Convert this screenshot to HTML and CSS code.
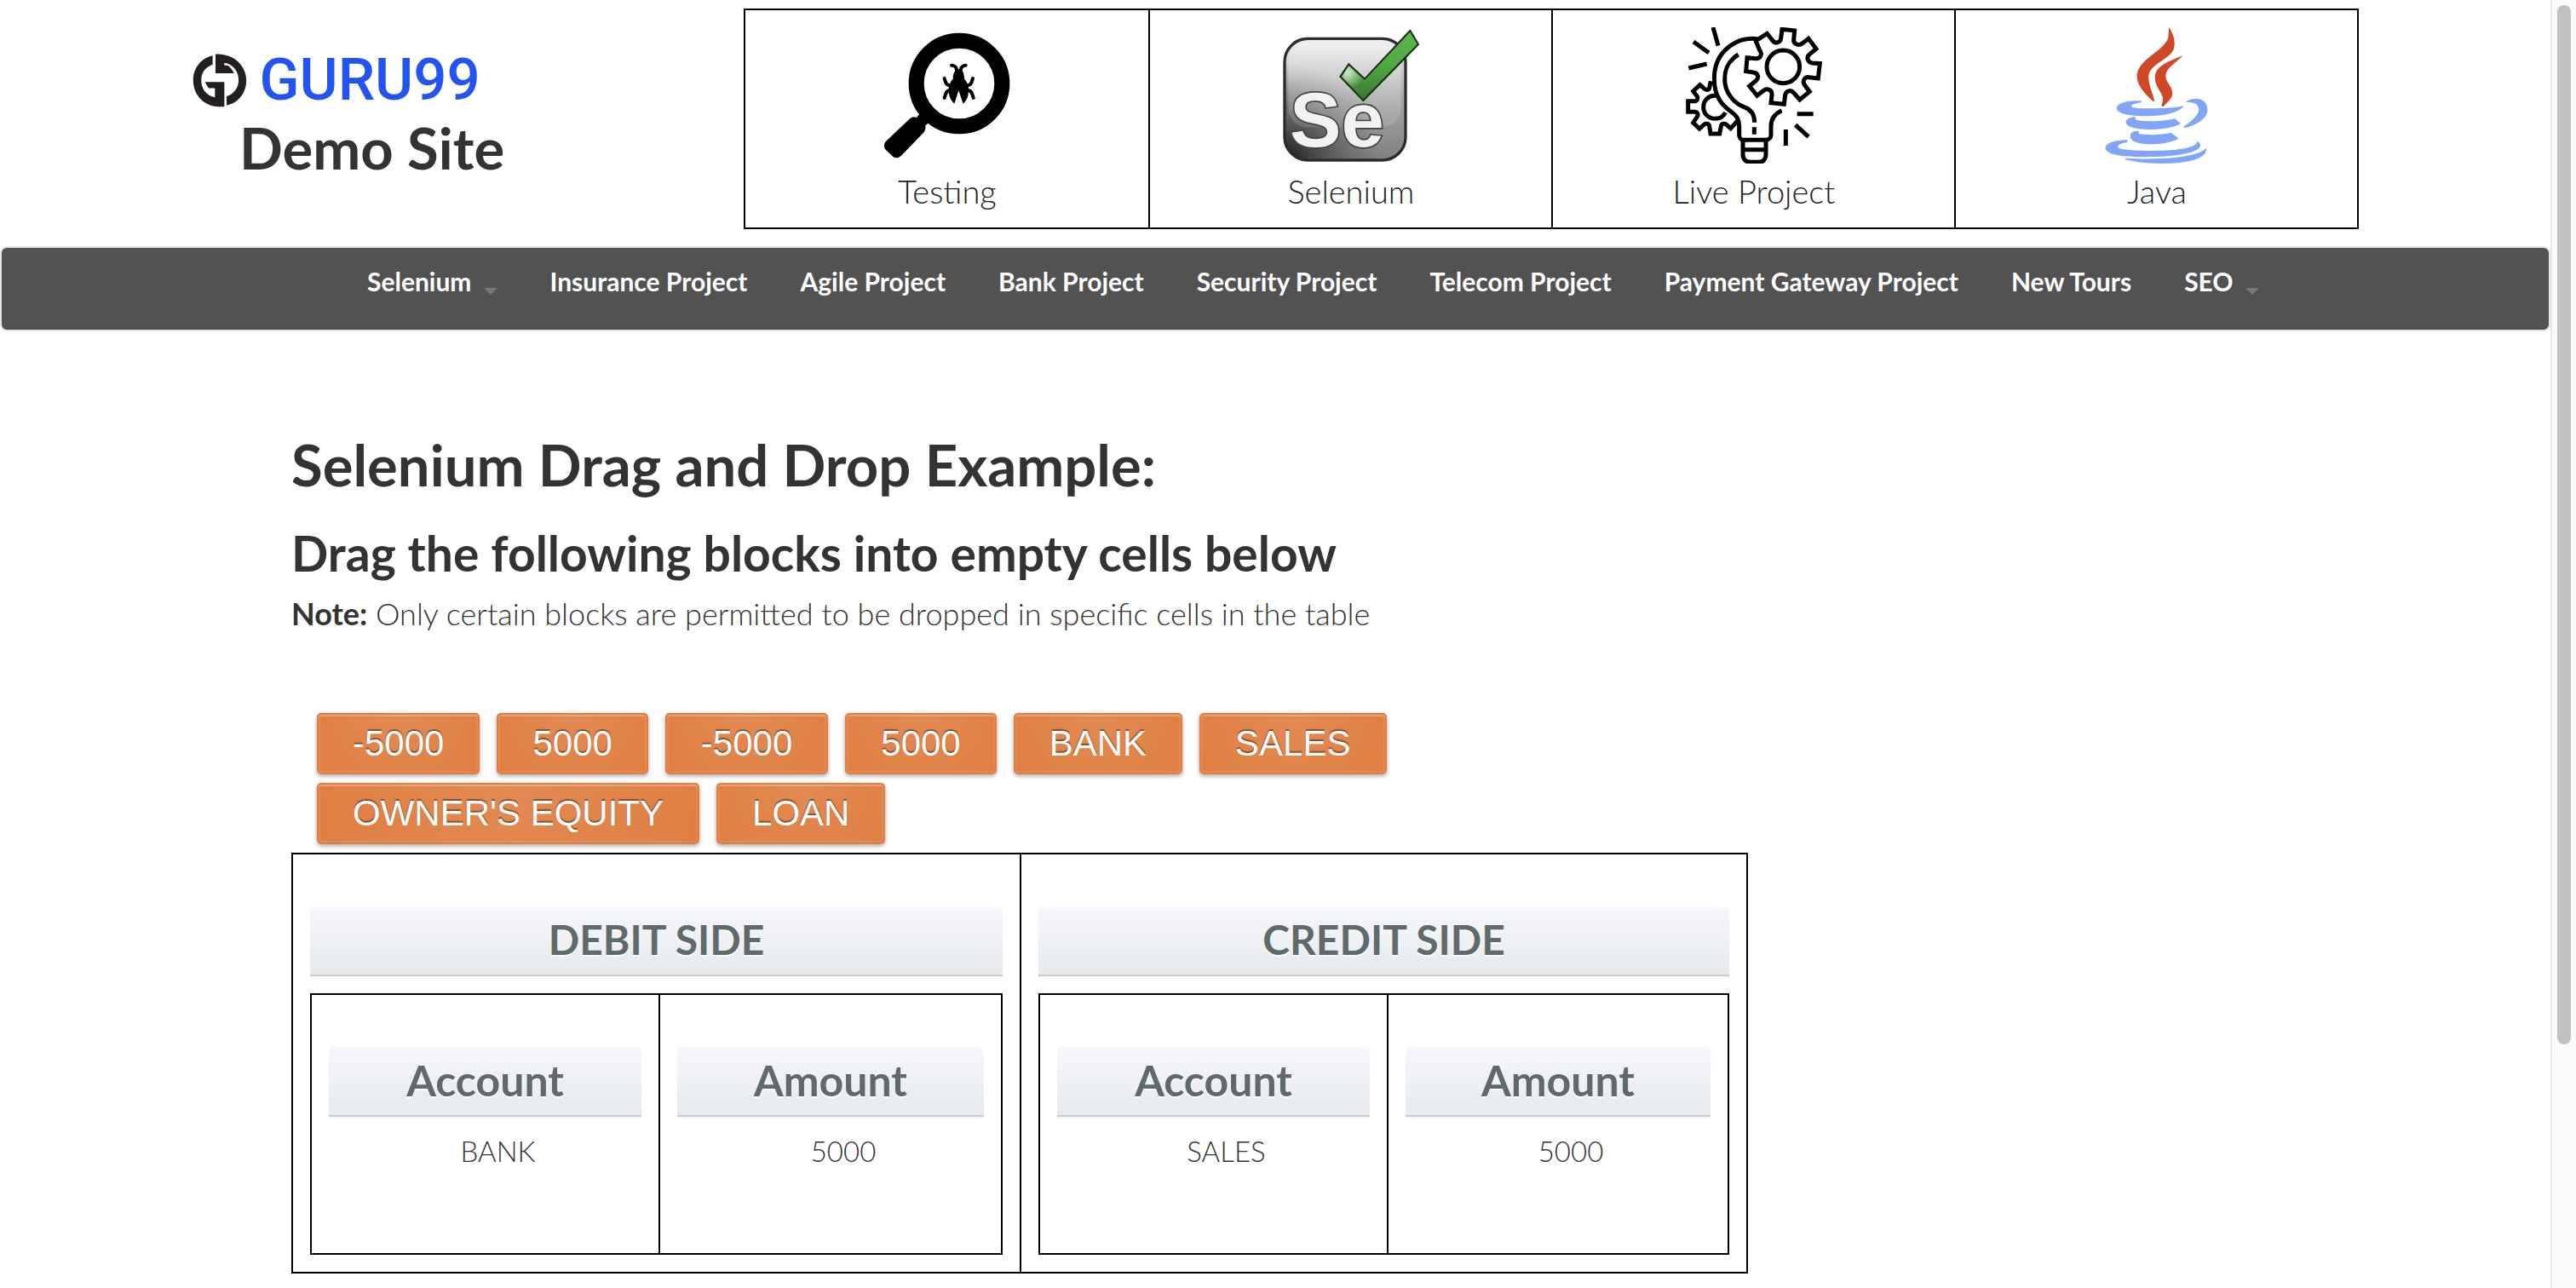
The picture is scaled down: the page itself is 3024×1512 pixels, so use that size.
FILE: index.html
```html
<!DOCTYPE html>
<html lang="en">
<head>
<meta charset="utf-8">
<title>Guru99 Demo Site</title>
<link rel="stylesheet" href="styles.css">
</head>
<body>
<div class="page">
<header class="site-header">
  <a class="brand" href="#">
    <span class="brand-row">
      <svg class="brand-mark" viewBox="74 64 196 194" aria-hidden="true" fill="#231f20">
        <path d="M147 74C108 82 79 116 79 161c0 52 40 91 89 92h20v-87h-68l13 22h22v32c-30-6-48-30-48-60 0-29 17-47 40-55z"/>
        <path d="M157 69c61-4 108 39 108 92 0 45-30 80-69 87v-32c23-7 42-28 42-56 0-35-23-57-50-61v9h12c10 8 18 18 22 28h-65z"/>
      </svg>
      <span class="brand-word">GURU99</span>
    </span>
    <span class="brand-title">Demo Site</span>
  </a>
  <ul class="tiles">
    <li><a href="#">
      <svg viewBox="489 96 480 480" aria-hidden="true">
        <circle cx="771" cy="294" r="151" fill="none" stroke="#000" stroke-width="54"/>
        <path d="M632 400l32 32-12 10c2 12-2 21-8 27l-77 79c-11 10-22 10-32 1l-22-21c-9-10-8-22 2-32l80-76c9-9 19-10 26-5z"/>
        <path d="M769 244c16 0 20 18 20 34 14 14 18 34 14 50 0 14-7 28-18 37l-16-46-15 46c-12-9-18-23-19-37-4-16 1-36 14-50 0-16 5-34 20-34z"/>
        <path d="M762 250c1-12-6-20-18-20m32 20c0-12 7-20 18-20m-59 70c-10 0-12-10-16-24m84 24c10 0 12-10 16-24m-82 43c-12 0-14 12-18 26m84-26c12 0 14 12 18 26" fill="none" stroke="#000" stroke-width="12" stroke-linecap="round"/>
      </svg>
      <span>Testing</span></a></li>
    <li><a href="#">
      <svg viewBox="468 96 480 480" aria-hidden="true">
        <defs>
          <linearGradient id="se-box" x1="0" y1="0" x2="0" y2="1"><stop offset="0" stop-color="#eee"/><stop offset=".5" stop-color="#a5a5a5"/><stop offset="1" stop-color="#808080"/></linearGradient>
          <radialGradient id="se-shade" cx="0" cy="1" r=".8"><stop offset="0" stop-color="#1c1c1c"/><stop offset="1" stop-color="#555" stop-opacity="0"/></radialGradient>
          <linearGradient id="se-gloss" x1="0" y1="0" x2="0" y2="1"><stop offset="0" stop-color="#fff" stop-opacity=".3"/><stop offset="1" stop-color="#fff" stop-opacity=".12"/></linearGradient>
          <linearGradient id="se-tick" x1="0" y1="0" x2="0" y2="1"><stop offset="0" stop-color="#5cb850"/><stop offset=".5" stop-color="#4fa842"/><stop offset="1" stop-color="#3a762f"/></linearGradient>
          <radialGradient id="se-shine" gradientUnits="userSpaceOnUse" cx="695" cy="255" r="60"><stop offset="0" stop-color="#fff" stop-opacity=".75"/><stop offset="1" stop-color="#fff" stop-opacity="0"/></radialGradient>
        </defs>
        <rect x="474" y="136" width="426" height="428" rx="82" fill="url(#se-box)"/>
        <rect x="474" y="136" width="426" height="428" rx="82" fill="url(#se-shade)"/>
        <rect x="488" y="148" width="396" height="300" rx="66" fill="url(#se-gloss)"/>
        <rect x="474" y="136" width="426" height="428" rx="82" fill="none" stroke="#2c2c2c" stroke-width="10"/>
        <text class="se-word" x="492" y="516">Se</text>
        <path d="M700 226l56 52 160-170 29 48-194 198-81-84z" fill="url(#se-tick)" stroke="#16300f" stroke-width="6"/>
        <path d="M700 232l56 54-5 62-75-78z" fill="url(#se-shine)"/>
      </svg>
      <span>Selenium</span></a></li>
    <li><a href="#">
      <svg viewBox="480 96 480 480" aria-hidden="true" fill="none" stroke="#000" stroke-width="15">
        <path d="M576 96l18 65M507 147l54 39M490 240l64-15M872 401h57M866 440l46 42M832 456v57"/>
        <path d="M732 137c-70-8-152 40-152 140 0 60 24 92 62 118 18 14 26 26 26 50v30c0 10 6 18 14 18h80c10 0 18-8 18-18v-32c0-26 16-44 38-54"/>
        <path d="M665 192c-36 22-48 50-48 88 0 44 30 82 68 97 24 8 37 26 37 54M721 448v25"/>
        <path d="M681 492v52c0 18 12 27 26 27h30c16 0 25-11 25-27v-52M681 527h81"/>
        <path d="M726 143l14-8 26-17 18 23c10 15 29 10 31-6l4-32 44 5-3 32c-1 15 18 23 30 13l22-17 27 36-23 19c-13 10-7 29 9 31l27 2-6 52-32-4c-16-2-25 14-15 28l17 23-35 28-21-24c-10-12-28-8-30 8l-4 32-46-5 3-28c1-18-17-25-29-15l-23 18-27-34 22-18c14-12 8-28-8-30l-26-4 4-48 29 3c18 2 26-16 15-29z"/>
        <circle cx="823" cy="235" r="58"/>
        <path d="M568 286l-5 24c-3 8-12 8-18 2l-15-13-24 22 13 17c5 7 2 17-7 18h-24v38h24c10 1 13 10 7 18l-13 20 22 21 17-15c7-5 17-2 18 7l4 26h32l5-26c1-9 11-12 18-7l16 14 24-26M588 337c-28-3-46 17-46 40 0 24 19 41 41 41 17 0 30-9 36-22"/>
      </svg>
      <span>Live Project</span></a></li>
    <li><a href="#">
      <svg viewBox="490 96 480 480" aria-hidden="true">
        <g transform="scale(1.404 1)" fill="#cf4927">
          <path d="M550 96c10 20 17 46 13 72-6 40-64 58-64 102 0 28 10 58 15 84l-3 4c-18-24-41-54-41-90 0-64 82-94 79-148z"/>
          <path d="M585 196c-16 24-43 44-43 72 0 22 17 36 17 62 0 18-14 30-23 46l-5-3c2-8 4-16 4-24 0-22-20-42-20-76 0-42 40-60 70-77z"/>
        </g>
        <g transform="scale(1.404 1)" fill="#81a5f7">
          <path d="M481 355c-36-3-62 8-62 26 0 20 34 28 77 28 48 0 80-14 92-36-24 8-66 9-94 9-32 0-48-6-32-15 6-4 14-5 19-6z"/>
          <path d="M593 360c4-9 18-13 28-12 17 1 26 18 26 40 0 28-26 52-57 63l-3-6c20-16 38-40 38-60 0-18-12-27-32-25z"/>
          <path d="M466 411c-14 2-24 9-24 18 0 18 26 27 58 27s60-6 80-20l-15-18c-26 10-84 12-99 3z"/>
          <path d="M475 463c-12-4-22 4-22 16 0 20 24 29 54 29 26 0 50-8 68-20l-20-21c-16 8-60 10-80 4z"/>
          <path d="M446 493c-32 0-55 12-55 28 0 24 46 32 104 32 60 0 134-12 134-42 0-6-4-12-8-14 2 30-76 34-122 34-40 0-77-4-77-14 0-9 14-14 24-16z"/>
          <path d="M441 557c72 6 176 2 203-35 2 38-48 54-114 54-36 0-66-6-89-14z"/>
        </g>
      </svg>
      <span>Java</span></a></li>
  </ul>
</header>

<nav class="navbar">
  <a class="has-menu" href="#">Selenium</a>
  <a href="#">Insurance Project</a>
  <a href="#">Agile Project</a>
  <a href="#">Bank Project</a>
  <a href="#">Security Project</a>
  <a href="#">Telecom Project</a>
  <a href="#">Payment Gateway Project</a>
  <a href="#">New Tours</a>
  <a class="has-menu" href="#">SEO</a>
</nav>

<main class="content">
  <h1>Selenium Drag and Drop Example:</h1>
  <h2>Drag the following blocks into empty cells below</h2>
  <p class="note"><strong>Note:</strong> Only certain blocks are permitted to be dropped in specific cells in the table</p>

  <div class="blocks">
    <a href="#" draggable="true">-5000</a>
    <a href="#" draggable="true">5000</a>
    <a href="#" draggable="true">-5000</a>
    <a href="#" draggable="true">5000</a>
    <a href="#" draggable="true">BANK</a>
    <a href="#" draggable="true">SALES</a>
    <a href="#" draggable="true">OWNER'S EQUITY</a>
    <a href="#" draggable="true">LOAN</a>
  </div>

  <div class="ledger">
    <section class="side">
      <h3 class="bar">DEBIT SIDE</h3>
      <table class="entries">
        <thead><tr><th><div class="bar">Account</div></th><th><div class="bar">Amount</div></th></tr></thead>
        <tbody><tr><td>BANK</td><td>5000</td></tr></tbody>
      </table>
    </section>
    <section class="side">
      <h3 class="bar">CREDIT SIDE</h3>
      <table class="entries">
        <thead><tr><th><div class="bar">Account</div></th><th><div class="bar">Amount</div></th></tr></thead>
        <tbody><tr><td>SALES</td><td>5000</td></tr></tbody>
      </table>
    </section>
  </div>
</main>
</div>
<div class="scroll-track"><div class="scroll-thumb"></div></div>
</body>
</html>
```
FILE: styles.css
```css
* { box-sizing: border-box; }

body {
  margin: 0;
  display: grid;
  grid-template-columns: minmax(0, 1fr) 30px;
  background: #fff;
  color: #333;
  font-family: Lato, "Open Sans", sans-serif;
  font-size: 36px;
  font-weight: 300;
  line-height: 40px;
}

a { color: inherit; text-decoration: none; }
h1, h2, h3, p, ul { margin: 0; padding: 0; }

/* Header */
.site-header {
  width: 85%;
  margin: 0 auto;
  padding-top: 10px;
  display: flex;
  justify-content: space-between;
}

.brand {
  width: 424px;
  padding-top: 40px;
  display: flex;
  flex-direction: column;
}

.brand-row { display: flex; align-items: center; gap: 14px; }

.brand-mark { width: 66px; height: 65px; display: block; }

.brand-word {
  font-family: Roboto, sans-serif;
  font-weight: 500;
  font-size: 69px;
  line-height: 88px;
  color: #2353f0;
}

.brand-title {
  text-align: center;
  font-size: 67px;
  font-weight: 700;
  line-height: 70px;
}

.tiles {
  width: 1896px;
  display: grid;
  grid-template-columns: repeat(4, 1fr);
  list-style: none;
  border: 2px solid #000;
}

.tiles li + li { border-left: 2px solid #000; }

.tiles a {
  display: flex;
  flex-direction: column;
  align-items: center;
  gap: 12px;
  padding: 20px 0 23px;
  color: #222;
  font-size: 38px;
}

.tiles svg { width: 160px; height: 160px; display: block; }

.se-word {
  font-family: "Liberation Sans", sans-serif;
  font-weight: 700;
  font-size: 272px;
  fill: #f2f2f2;
  stroke: #444;
  stroke-width: 10px;
  paint-order: stroke;
}

/* Navigation bar */
.navbar {
  margin: 20px 0 0;
  height: 100px;
  padding: 20px 0 0 429px;
  display: flex;
  gap: 62px;
  background: #525252;
  border: 2px solid #e7e7e7;
  border-radius: 8px;
  color: #fff;
  font-size: 30px;
  font-weight: 700;
  line-height: 38px;
  white-space: nowrap;
}

.has-menu { display: flex; gap: 14px; }

.has-menu::after {
  content: "";
  margin-top: 27px;
  align-self: flex-start;
  border: 8px solid transparent;
  border-top-color: #777;
  border-bottom: 0;
}

/* Main content */
.content {
  max-width: 2310px;
  margin: 0 auto;
  padding: 121px 0 16px;
}

h1 { font-size: 67px; line-height: 70px; }
h2 { margin-top: 40px; font-size: 57px; line-height: 58px; }
.note { margin-top: 22px; }
.note strong { font-weight: 700; }

.blocks {
  max-width: 1710px;
  margin-top: 97px;
  padding-left: 30px;
  display: flex;
  flex-wrap: wrap;
  gap: 10px 20px;
  font-family: "Liberation Sans", Arial, sans-serif;
  font-size: 42px;
  font-weight: 400;
}

.blocks a {
  height: 72px;
  padding: 0 40px;
  line-height: 68px;
  color: #fff;
  text-shadow: 0 -2px 1px rgba(0, 0, 0, .4);
  background: radial-gradient(circle at 50% 0, #e28a53, #df7f42);
  border: 2px solid #df7f42;
  border-radius: 5px;
  box-shadow: inset 0 2px 0 rgba(255, 255, 255, .2), inset 0 0 0 2px rgba(255, 255, 255, .08), 0 2px 5px rgba(0, 0, 0, .35);
}

/* Ledger */
.ledger {
  max-width: 1710px;
  margin-top: 10px;
  display: grid;
  grid-template-columns: 1fr 1fr;
  border: 2px solid #000;
}

.side { padding: 60px 20px 20px; }
.side + .side { border-left: 2px solid #000; }

.bar {
  height: 83px;
  border-bottom: 2px solid #ccc;
  border-radius: 6px 6px 0 0;
  background: linear-gradient(#f6f7fd, #e6eaec);
  box-shadow: inset 0 2px 0 #fafaff, 0 2px 0 #f6f6f6;
  color: #5f6b6a;
  text-align: center;
  text-shadow: 0 2px 0 #fff;
  font-size: 48px;
  font-weight: 700;
  line-height: 80px;
}

.entries {
  width: 100%;
  margin-top: 20px;
  table-layout: fixed;
  border: 2px solid #000;
  border-spacing: 0;
}

.entries .bar { font-size: 50px; }
.entries th, .entries td { padding: 0 20px; text-align: center; }
.entries th { padding-top: 60px; }
.entries th:first-child { width: 407px; }
.entries th + th, .entries td + td { border-left: 2px solid #000; }
.entries td { padding: 20px 20px 100px 50px; font-size: 33px; }

/* Scroll bar */
.scroll-track {
  position: sticky;
  top: 0;
  height: 100vh;
  padding: 6px 6px 0;
  background: #fafafa;
  border-left: 2px solid #e8e8e8;
}

.scroll-thumb { height: 81%; border-radius: 8px; background: #c1c1c1; }
```
